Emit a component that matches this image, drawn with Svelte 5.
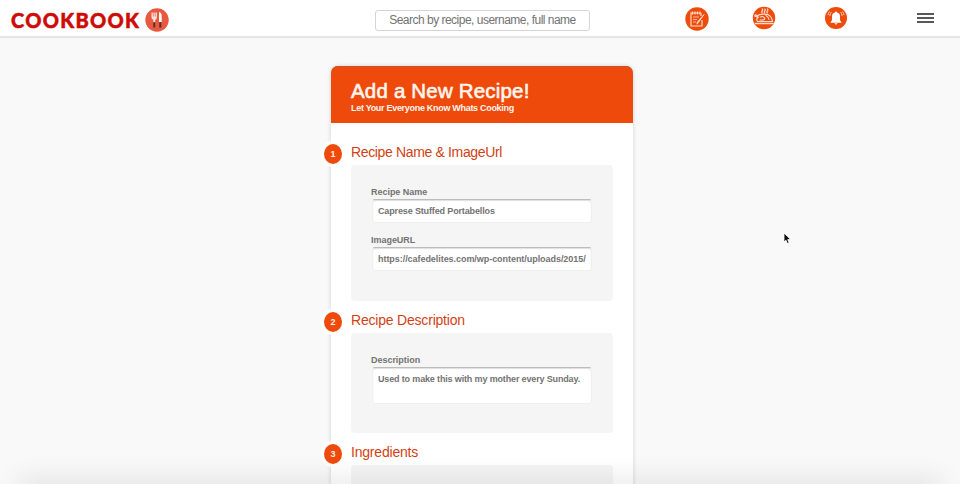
<script>
  const sections = [
    {
      title: 'Recipe Name & ImageUrl',
      spacing: -0.35,
      height: 136,
      fields: [
        { label: 'Recipe Name', value: 'Caprese Stuffed Portabellos', spacing: -0.14 },
        { label: 'ImageURL', value: 'https://cafedelites.com/wp-content/uploads/2015/', spacing: -0.05 }
      ]
    },
    {
      title: 'Recipe Description',
      spacing: -0.2,
      height: 100,
      fields: [{ label: 'Description', value: 'Used to make this with my mother every Sunday.', tall: true, spacing: -0.15 }]
    },
    { title: 'Ingredients', spacing: -0.2, height: 100, fields: [] }
  ];
</script>

<div class="page">
  <header>
    <div class="brand">
      <span class="name">COOKBOOK</span>
      <svg width="24" height="24" viewBox="0 0 24 24">
        <circle cx="12" cy="12" r="11.7" fill="#e9593f" />
        <path d="M6.500 4.500h5.400v4.800q0 2-1.700 2.500v2.700H8.300v-2.700q-1.800-.5-1.800-2.500z" fill="#fae3dc" />
        <path d="M8.300 4v4.500M10.200 4v4.500" stroke="#e9593f" stroke-width=".7" />
        <path d="M14 4q2.700.5 2.700 4v6H14z" fill="#fff" />
        <path d="M8.300 14.200h1.900v5.300H8.300zM14.300 14.200h2v5.300h-2z" fill="#4d302c" />
      </svg>
    </div>
    <div class="search"><span>Search by recipe, username, full name</span></div>
    <nav>
      <svg width="24" height="24" viewBox="0 0 24 24">
        <circle cx="12" cy="12" r="11.7" fill="#ed4c0b" />
        <g fill="none" stroke="#ffe2d3" stroke-width="1.1">
          <path d="M15.500 6H6v13h11V13M16 6v3" />
          <path d="M7.500 4.500v3M10 4.500v3M12.500 4.500v3M15 4.500v3" />
          <path d="M8 10h6M8 12.500h4M8 15h3" stroke-width=".7" />
          <path d="M19 7.500l-5.800 8.200-1.200 1.500.3-2z" fill="#ffe2d3" stroke-width=".8" />
        </g>
      </svg>
      <svg width="24" height="24" viewBox="0 0 24 24">
        <circle cx="12" cy="12" r="11.2" fill="#ed4c0b" />
        <g fill="none" stroke="#ffe0d0" stroke-width="1.1" stroke-linecap="round">
          <path d="M10.200 3q1 1 0 2t0 2M12.800 3q1 1 0 2t0 2M15.400 3q1 1 0 2t0 2" />
          <path d="M3.500 17.500h17.500" stroke-width="1.500" />
          <path d="M5.500 15.500q-1.800-2.500.8-4.200L3 10.300q-.6-1.300.6-1.400l2 .9 2-1.200q5-1 8 0 4 1.600 4.900 6.900z" />
          <path d="M8.500 11q1.800-1.200 3.500.3t-.5 2.700H8M14 9.500q2.500 1.500 3 4" />
        </g>
      </svg>
      <svg width="24" height="24" viewBox="0 0 24 24">
        <circle cx="12" cy="12" r="11" fill="#ed4c0b" />
        <path d="M11 6.500q0-1 1-1t1 1q3 .6 3 4v3.700l1.300 1.800v.8H6.700V16L8 14.200v-3.700q0-3.400 3-4zM10.500 17.300h3q-.3 1.300-1.500 1.300t-1.500-1.300z" fill="#fff" />
        <path d="M7.500 6Q6 7.500 5.800 10M5.500 5.500Q4.300 7 4 9M16.500 6q1.500 1.500 1.700 4M18.500 5.500q1.200 1.500 1.500 3.500" fill="none" stroke="#ffd9c8" stroke-width=".9" />
      </svg>
      <div class="burger"><i></i><i></i><i></i></div>
    </nav>
  </header>

  <main>
    <div class="banner">
      <h1>Add a New Recipe!</h1>
      <p>Let Your Everyone Know Whats Cooking</p>
    </div>
    <div class="form">
      {#each sections as s, i}
        <section>
          <h2><b>{i + 1}</b><span style="letter-spacing:{s.spacing}px">{s.title}</span></h2>
          <div class="panel" style="height:{s.height}px">
            {#each s.fields as f}
              <div class="field">
                <div class="label">{f.label}</div>
                <div class="input" class:tall={f.tall}><div class="value" style="letter-spacing:{f.spacing}px">{f.value}</div></div>
              </div>
            {/each}
          </div>
        </section>
      {/each}
    </div>
  </main>
  <div class="fade"></div>
  <svg class="cursor" width="9" height="13" viewBox="0 0 9 13">
    <path d="M1 1v9l2-1.800 1.400 3.300 1.700-.7-1.400-3.200h3z" fill="#111" stroke="#fff" stroke-width=".8" />
  </svg>
</div>

<style>
  .page {
    position: relative;
    height: 484px;
    overflow: hidden;
    background: #f9f9f9;
    font-family: 'Liberation Sans', Arial, sans-serif;
    color: #737373;
  }
  header {
    display: flex;
    box-sizing: border-box;
    height: 38px;
    padding: 0 26px 0 11px;
    background: #fff;
    border-bottom: 2px solid #e5e5e5;
  }
  svg { display: block; }
  .brand { display: flex; width: 364px; padding-top: 8px; }
  .brand svg { margin-left: 1px; }
  .name {
    width: 133px;
    font: 900 20px/24px Lato, sans-serif;
    letter-spacing: 1.3px;
    -webkit-text-stroke: 0.5px #ce0b05;
    color: #ce0b05;
    white-space: nowrap;
  }
  .search {
    box-sizing: border-box;
    width: 215px;
    height: 21px;
    margin-top: 10px;
    border: 1px solid #d4d4d4;
    border-radius: 3px;
    text-align: center;
    font-size: 12px;
    line-height: 18px;
    letter-spacing: -0.51px;
    white-space: nowrap;
  }
  nav { display: flex; margin-left: 95px; padding-top: 7px; }
  nav svg:nth-child(2) { margin-left: 43px; margin-top: -1px; }
  nav svg:nth-child(3) { margin-left: 48px; margin-top: -1px; }
  .burger {
    display: flex;
    flex-direction: column;
    gap: 2px;
    width: 17px;
    margin-left: 69px;
    padding-top: 6px;
  }
  .burger i { height: 2px; background: #59575a; }
  main {
    width: 302px;
    height: 500px;
    margin: 28px 0 0 331px;
    background: #fff;
    border-radius: 7px 7px 0 0;
    box-shadow: 0 0 4px rgba(0, 0, 0, 0.16);
  }
  .banner {
    box-sizing: border-box;
    height: 57px;
    padding: 13px 20px 0;
    background: #ee4a0c;
    border-radius: 7px 7px 0 0;
    box-shadow: inset 0 1px 0 #c8542a;
    color: #fff5ed;
    white-space: nowrap;
  }
  h1 {
    margin: 0;
    font-size: 20.500px;
    font-weight: 400;
    line-height: 24px;
    letter-spacing: 0.18px;
    -webkit-text-stroke: 0.6px #fff5ed;
  }
  p { margin: 0; font-size: 9px; font-weight: 700; line-height: 10px; letter-spacing: -0.3px; }
  .form { padding: 20px 20px 0; }
  h2 {
    display: flex;
    align-items: center;
    height: 20px;
    margin: 0 0 2px -27px;
    font-size: 14px;
    font-weight: 400;
    color: #d33f14;
    white-space: nowrap;
  }
  h2 span { line-height: 18px; padding-bottom: 2px; }
  h2 b {
    width: 18px;
    height: 20px;
    margin: 2px 9px 0 0;
    border-radius: 50%;
    background: #ee4a0c;
    box-shadow: 0 0 0 3px #fff;
    color: #ffeadf;
    font-size: 9px;
    line-height: 20px;
    text-align: center;
  }
  .panel {
    box-sizing: border-box;
    width: 262px;
    margin-bottom: 10px;
    padding: 21px 20px 0;
    border-radius: 4px;
    background: #f5f5f5;
    overflow: hidden;
  }
  .field { height: 48px; }
  .label { height: 13px; font-size: 9px; font-weight: 700; line-height: 12px; letter-spacing: -0.03px; }
  .input {
    box-sizing: border-box;
    width: 220px;
    height: 24px;
    margin: 0 0 0 1px;
    padding: 0 5px 0 6px;
    background: #fff;
    border: 1px solid #f0f0f0;
    border-top-color: #bcbcbc;
    border-radius: 3px;
    box-shadow: inset 0 1px 1px #dedede;
  }
  .input.tall { height: 37px; }
  .value {
    overflow: hidden;
    margin-left: -1px;
    font-size: 9px;
    font-weight: 700;
    line-height: 22px;
    white-space: nowrap;
  }
  .fade {
    position: absolute;
    left: 0;
    right: 0;
    bottom: -12px;
    height: 12px;
    margin: 0 22px;
    box-shadow: 0 0 28px 4px rgba(0, 0, 0, 0.11);
  }
  .cursor { position: absolute; left: 783px; top: 232px; }
</style>
